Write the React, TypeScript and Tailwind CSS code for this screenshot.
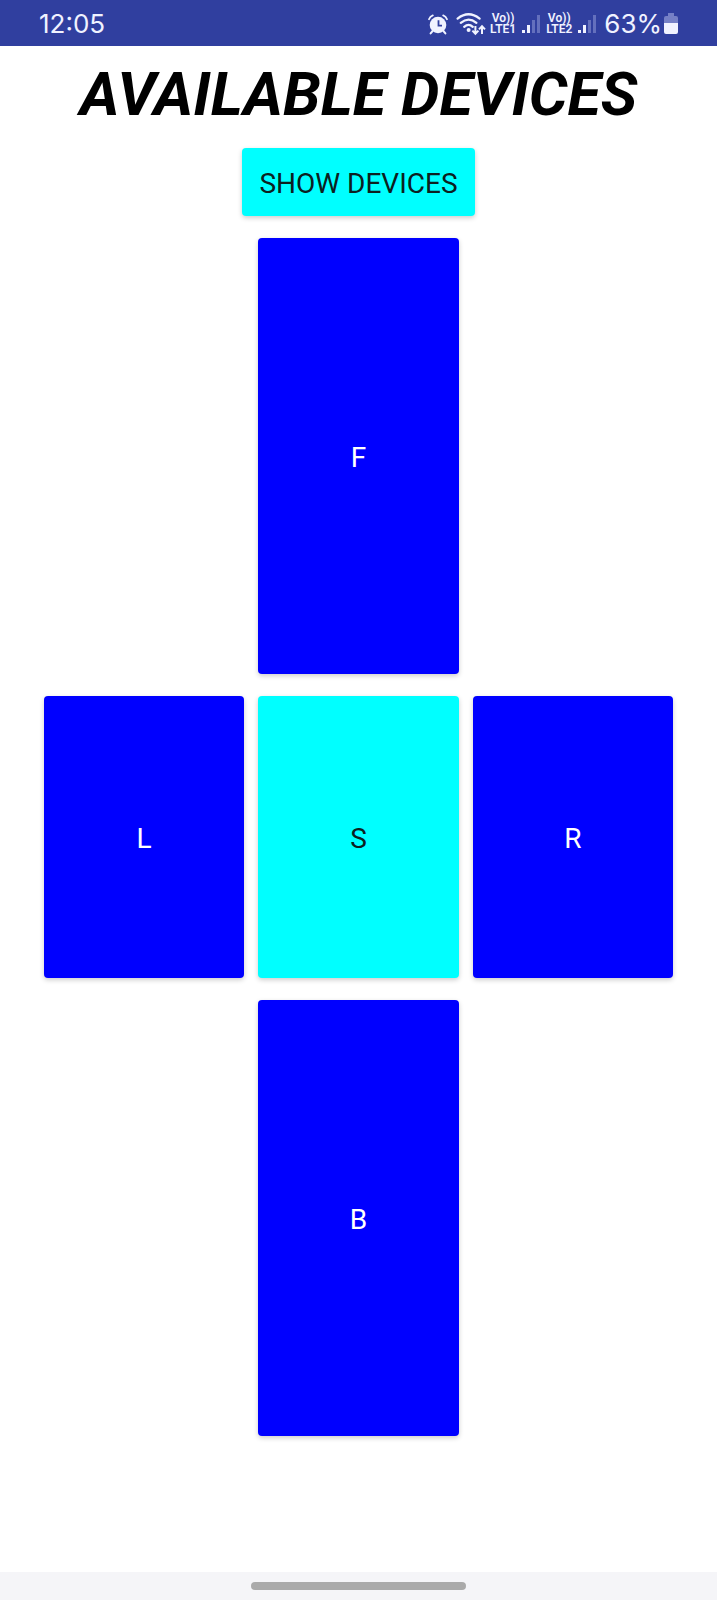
import React from "react";

function AlarmIcon() {
  return (
    <svg width="20" height="21" viewBox="0 0 20 21" role="img" aria-label="Alarm set">
      <g fill="none" stroke="#f0f2ff" strokeWidth="1.8" strokeLinecap="round">
        <path d="M1 5.2Q2 2.4 4.8 1.4M19 5.2Q18 2.4 15.2 1.4" />
        <path d="M4.6 17L2.6 19.4M15.4 17L17.4 19.4" strokeWidth="2" />
      </g>
      <circle cx="10" cy="11" r="8.3" fill="#f0f2ff" />
      <path d="M10.5 6.2V11.6H14" fill="none" stroke="#303f9f" strokeWidth="1.8" />
    </svg>
  );
}

function WifiIcon() {
  return (
    <svg width="30" height="23" viewBox="0 0 30 23" role="img" aria-label="Wi-Fi connected">
      <g fill="none" stroke="#f0f2ff" strokeWidth="2.3" strokeLinecap="round">
        <path d="M1.6 5.6Q12.5 -3 23.6 5.6" />
        <path d="M4.8 9.8Q12.5 3.4 20.4 9.8" />
        <path d="M8.2 13.8Q12.5 10 16.8 13.8" />
      </g>
      <circle cx="12.6" cy="17" r="2" fill="#f0f2ff" />
      <g fill="none" stroke="#f0f2ff" strokeWidth="2">
        <path d="M19.4 13V20.4M16.4 17.6L19.4 20.8L22.4 17.6" />
        <path d="M26 21V13.6M23 16.4L26 13.2L29 16.4" />
      </g>
    </svg>
  );
}

function SignalIcon() {
  return (
    <svg width="18" height="20" viewBox="0 0 18 20" role="img" aria-label="Signal strength 2 of 4">
      <path d="M0 16h3v3H0zM5 11h3v8H5z" fill="#f0f2ff" />
      <path d="M10 6h3v13h-3zM15 1h3v18h-3z" fill="#6470bd" />
    </svg>
  );
}

function BatteryIcon() {
  return (
    <svg width="14" height="22" viewBox="0 0 14 22" role="img" aria-label="Battery">
      <path d="M4 0h6v3H12a2 2 0 0 1 2 2v5H0V5a2 2 0 0 1 2-2h2z" fill="#7580c6" />
      <path d="M0 10h14v9a2 2 0 0 1-2 2H2a2 2 0 0 1-2-2z" fill="#f0f2ff" />
    </svg>
  );
}

function Network({ name }: { name: string }) {
  return (
    <div className="flex items-center gap-1.5">
      <div className="flex flex-col items-center text-[12px] leading-[11px] font-semibold">
        <span>Vo))</span>
        <span>{name}</span>
      </div>
      <SignalIcon />
    </div>
  );
}

function StatusBar() {
  return (
    <header className="flex h-[46px] items-center justify-between bg-[#303f9f] px-[39px] pt-0.5 text-[#f0f2ff]">
      <time className="font-[Inter,sans-serif] text-[26px] leading-8">12:05</time>
      <div className="flex items-center">
        <div className="mr-1 flex items-center gap-2">
          <AlarmIcon />
          <WifiIcon />
        </div>
        <div className="mr-2 flex items-center gap-1.5">
          <Network name="LTE1" />
          <Network name="LTE2" />
        </div>
        <span className="mr-0.5 font-[Inter,sans-serif] text-[26px] leading-8">63%</span>
        <BatteryIcon />
      </div>
    </header>
  );
}

const shadow = "shadow-[0_2px_5px_rgba(0,0,0,0.2)]";

function PadButton({ label, className }: { label: string; className: string }) {
  return (
    <button type="button" className={`rounded-sm pt-1 text-[28px] leading-9 ${shadow} ${className}`}>
      {label}
    </button>
  );
}

export default function App() {
  return (
    <div className="flex min-h-screen flex-col bg-white font-[Roboto,sans-serif]">
      <StatusBar />
      <main className="flex flex-1 flex-col items-center px-11 pt-3 pb-8">
        <h1 className="text-center text-[61px] leading-[72px] font-bold text-black italic">AVAILABLE DEVICES</h1>
        <button
          type="button"
          className={`mt-[18px] rounded-sm bg-[#00ffff] px-[17px] pt-[18px] pb-[14px] text-[28px] leading-9 text-[#0c2020] ${shadow}`}
        >
          SHOW DEVICES
        </button>
        <div className="mt-[22px] grid w-full grid-cols-3 gap-x-[14px] gap-y-[22px]">
          <PadButton label="F" className="col-start-2 h-[436px] bg-[#0000ff] text-white" />
          <PadButton label="L" className="col-start-1 h-[282px] bg-[#0000ff] text-white" />
          <PadButton label="S" className="h-[282px] bg-[#00ffff] text-[#0c2020]" />
          <PadButton label="R" className="h-[282px] bg-[#0000ff] text-white" />
          <PadButton label="B" className="col-start-2 h-[436px] bg-[#0000ff] text-white" />
        </div>
      </main>
      <footer className="flex h-7 items-center justify-center bg-[#f5f5f8]">
        <div className="h-2 w-[30%] rounded-full bg-[#aaaaaa]" />
      </footer>
    </div>
  );
}
